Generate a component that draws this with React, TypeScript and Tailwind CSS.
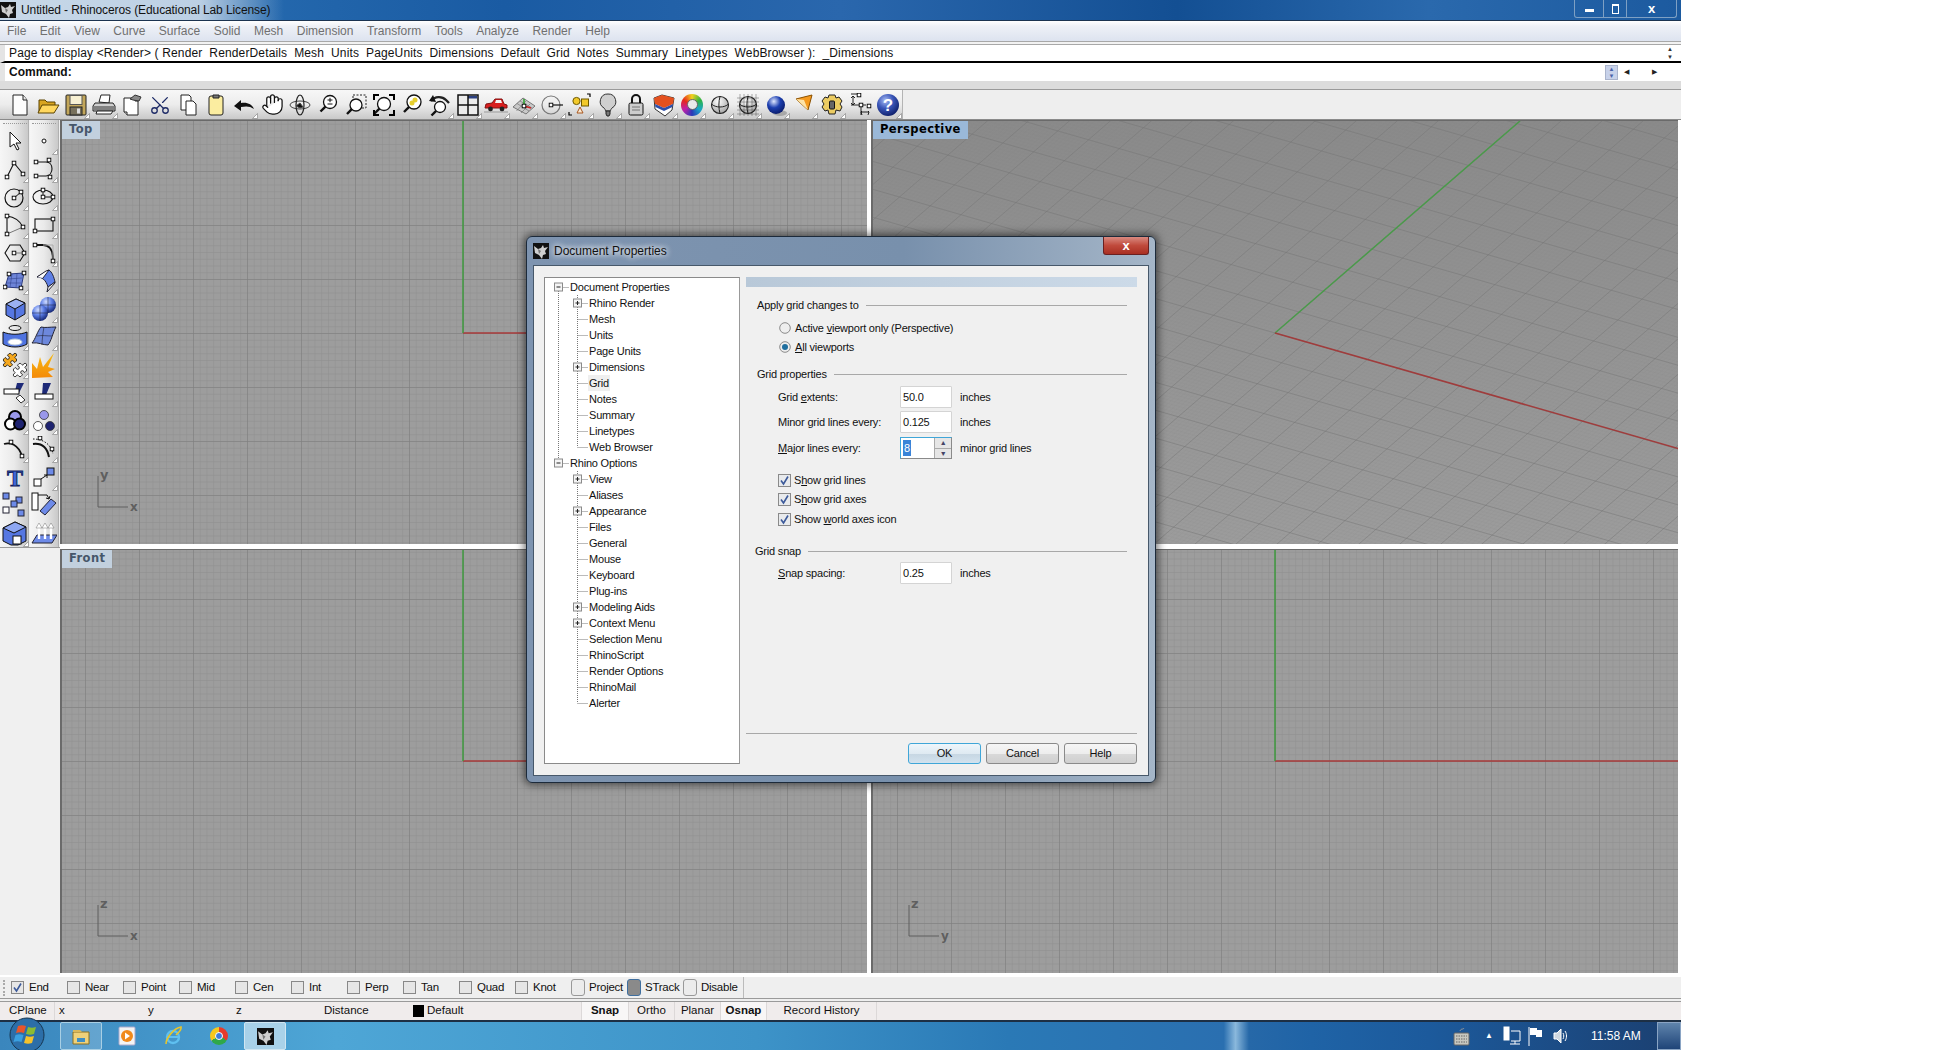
import type { ReactNode } from "react";
import { Hand, Puzzle, Scissors } from "lucide-react";

const menus = ["File", "Edit", "View", "Curve", "Surface", "Solid", "Mesh", "Dimension", "Transform", "Tools", "Analyze", "Render", "Help"];

// little control point square used all over the rhino toolbars
const P = ({ x, y, f = "#fff" }: { x: number; y: number; f?: string }) => (
  <rect x={x - 1.8} y={y - 1.8} width="3.6" height="3.6" fill={f} stroke="#000" strokeWidth="0.9" />
);

const Lens = ({ cx = 13, cy = 10, r = 6, fill = "#fff" }: { cx?: number; cy?: number; r?: number; fill?: string }) => (
  <g fill="none" stroke="#111">
    <circle cx={cx} cy={cy} r={r} fill={fill} strokeWidth="1.3" />
    <path d={`M${cx - r * 0.7} ${cy + r * 0.7}L${cx - r - 3} ${cy + r + 3}`} strokeWidth="2.4" />
  </g>
);

const Ball = ({ id, cx = 12, cy = 12, r = 9, a = "#dfe7ff", b = "#1c3fb0" }: { id: string; cx?: number; cy?: number; r?: number; a?: string; b?: string }) => (
  <>
    <defs>
      <radialGradient id={id} cx="0.38" cy="0.3" r="0.8">
        <stop offset="0" stopColor={a} />
        <stop offset="0.45" stopColor={b} />
        <stop offset="1" stopColor="#06145c" />
      </radialGradient>
    </defs>
    <circle cx={cx} cy={cy} r={r} fill={`url(#${id})`} />
  </>
);

const WireBall = ({ id }: { id: string }) => (
  <>
    <defs>
      <radialGradient id={id} cx="0.4" cy="0.3" r="0.8">
        <stop offset="0" stopColor="#fff" />
        <stop offset="1" stopColor="#9a9a9a" />
      </radialGradient>
    </defs>
    <circle cx="12" cy="12" r="8.5" fill={`url(#${id})`} stroke="#222" strokeWidth="1.1" />
    <path d="M3.5 11c4 4 13 4 17 0M12 3.5c-1.5 5-1.5 12 0 17" fill="none" stroke="#222" strokeWidth="1" />
  </>
);

const topIcons: { flag?: boolean; icon: ReactNode }[] = [
  { icon: <svg width="24" height="24" viewBox="0 0 24 24"><path d="M5 2h10l4 5v15H5z" fill="#fdfdfd" stroke="#222" /><path d="M15 2v5h4" fill="#e8e8e8" stroke="#222" /></svg> },
  { icon: <svg width="24" height="24" viewBox="0 0 24 24"><path d="M3 19V7h6l2 2h8v3" fill="#d9a520" stroke="#5a4200" /><path d="M2 20l4-8h17l-5 8z" fill="#ffd75e" stroke="#5a4200" /></svg> },
  { flag: true, icon: <svg width="24" height="24" viewBox="0 0 24 24"><rect x="2" y="2" width="20" height="20" rx="1" fill="#c2a65a" stroke="#222" /><rect x="6" y="2.5" width="12" height="9" fill="#f6efd2" stroke="#555" /><rect x="6" y="14" width="12" height="8" fill="#77705c" stroke="#222" /><rect x="13" y="15.5" width="3" height="5" fill="#ddd" /></svg> },
  { flag: true, icon: <svg width="24" height="24" viewBox="0 0 24 24"><path d="M7 9l2-7h9l-1 8z" fill="#fff" stroke="#222" /><path d="M3 10h18l2 3v5H1v-5z" fill="#cfcfcf" stroke="#222" /><path d="M2 14h20M2 16h20" stroke="#333" /><path d="M5 18l-1 3h15l2-3z" fill="#fff" stroke="#222" /></svg> },
  { icon: <svg width="24" height="24" viewBox="0 0 24 24"><path d="M4 5h11v3h3v14H7l-3-3z" fill="#fff" stroke="#222" /><path d="M10 6l5-4 6 2-2 4-6-1z" fill="#888" stroke="#333" /><path d="M4 19h3v3" fill="#ddd" stroke="#222" /></svg> },
  { icon: <Scissors size={22} color="#1d2a66" strokeWidth={1.4} className="-rotate-90" /> },
  { icon: <svg width="24" height="24" viewBox="0 0 24 24"><path d="M5 2h8l2 2v13H5z" fill="#fff" stroke="#222" /><path d="M10 8h7l3 3v11H10z" fill="#fff" stroke="#222" /></svg> },
  { icon: <svg width="24" height="24" viewBox="0 0 24 24"><rect x="5" y="3" width="14" height="19" rx="2" fill="#fbeda0" stroke="#222" /><path d="M9 2h6v3H9z" fill="#777" stroke="#222" /></svg> },
  { flag: true, icon: <svg width="24" height="24" viewBox="0 0 24 24"><path d="M2 13l7-6v3c6-1 11 1 13 6-4-3-8-3-13-2v4z" fill="#111" /></svg> },
  { icon: <Hand size={23} color="#111" strokeWidth={1.3} fill="#fff" /> },
  { icon: <svg width="24" height="24" viewBox="0 0 24 24" fill="none" stroke="#444"><ellipse cx="12" cy="12" rx="10" ry="4" /><ellipse cx="12" cy="12" rx="4" ry="10" strokeWidth="1.2" stroke="#222" /><path d="M8 13l4-3 3 4-3 1z" fill="#111" /></svg> },
  { icon: <svg width="24" height="24" viewBox="0 0 24 24"><Lens cx={14} cy={9} r={6.5} /><path d="M11.5 7h5M14 4.8v4.4M11.5 11h5" stroke="#111" fill="none" /></svg> },
  { icon: <svg width="24" height="24" viewBox="0 0 24 24"><rect x="9" y="2" width="13" height="13" fill="none" stroke="#222" strokeDasharray="2 1.5" /><Lens cx={12} cy={12} r={6} /></svg> },
  { icon: <svg width="24" height="24" viewBox="0 0 24 24"><Lens cx={12} cy={11} r={6.5} /><path d="M2 7V2h5M17 2h5v5M22 17v5h-5M7 22H2v-5" fill="none" stroke="#000" strokeWidth="2" /></svg> },
  { icon: <svg width="24" height="24" viewBox="0 0 24 24"><Lens cx={14} cy={9} r={7} /><circle cx="15" cy="7" r="2.5" fill="#e6cf2e" /><circle cx="12" cy="10" r="2.5" fill="#e6cf2e" /></svg> },
  { flag: true, icon: <svg width="24" height="24" viewBox="0 0 24 24"><Lens cx={12} cy={14} r={5.5} /><path d="M3 8c4-5 11-5 15-1l3 3" fill="none" stroke="#222" strokeWidth="2.4" /><path d="M5 2L1 8l7 1z" fill="#111" /></svg> },
  { flag: true, icon: <svg width="24" height="24" viewBox="0 0 24 24"><rect x="2" y="2" width="20" height="20" fill="#ececec" stroke="#111" strokeWidth="1.5" /><rect x="12" y="3" width="9" height="2.5" fill="#2b3f80" /><path d="M12 2v20M2 12h20" stroke="#111" strokeWidth="1.5" /></svg> },
  { flag: true, icon: <svg width="24" height="24" viewBox="0 0 24 24"><path d="M1 15l1-4 6-1 3-4h7l2 5 3 1v3z" fill="#d81e1e" stroke="#801010" /><path d="M12 7h5l1 3h-7z" fill="#f4f4f4" /><circle cx="6.5" cy="16" r="2.4" fill="#222" /><circle cx="18" cy="16" r="2.4" fill="#222" /><path d="M0 19h24" stroke="#999" /></svg> },
  { flag: true, icon: <svg width="24" height="24" viewBox="0 0 24 24" fill="none"><path d="M1 14l10-9 12 8-9 8z" fill="#c9c9c9" stroke="#777" /><path d="M5 10.5l12 7.5M8 8l12 7M4.5 18L14 8M9 20l9-9" stroke="#777" strokeWidth="0.7" /><path d="M12 13V6" stroke="#29a329" strokeWidth="1.5" /><path d="M12 13l7 2" stroke="#d02020" strokeWidth="1.5" /><P x={12} y={13} /></svg> },
  { flag: true, icon: <svg width="24" height="24" viewBox="0 0 24 24" fill="none"><circle cx="11" cy="12" r="9" stroke="#777" strokeWidth="1.2" /><path d="M11 12h12" stroke="#111" strokeWidth="1.2" /><P x={11} y={12} /></svg> },
  { flag: true, icon: <svg width="24" height="24" viewBox="0 0 24 24" fill="none"><circle cx="8.5" cy="8" r="3.6" fill="#f2c92a" stroke="#6d5800" /><rect x="13.5" y="6" width="7" height="7" fill="#f2c92a" stroke="#6d5800" /><path d="M12 14l3 6H9z" fill="#fbe9d0" stroke="#a8561e" /><path d="M19 1h3v3M1 19v3h3" stroke="#000" strokeWidth="1.2" /></svg> },
  { flag: true, icon: <svg width="24" height="24" viewBox="0 0 24 24"><path d="M12 1a7.5 7.5 0 0 0-4 14c1 1 1.5 2 1.5 3h5c0-1 .5-2 1.5-3a7.5 7.5 0 0 0-4-14z" fill="#cfcfcf" stroke="#333" /><path d="M10 18h4v3l-1 2h-2l-1-2z" fill="#777" stroke="#222" /></svg> },
  { flag: true, icon: <svg width="24" height="24" viewBox="0 0 24 24"><path d="M8 11V6a4 4 0 0 1 8 0v5" fill="none" stroke="#111" strokeWidth="2" /><rect x="5" y="10" width="14" height="12" rx="1.5" fill="#cdcdcd" stroke="#111" /><path d="M8 14h8M8 17h8" stroke="#777" /></svg> },
  { flag: true, icon: <svg width="24" height="24" viewBox="0 0 24 24"><path d="M2 5l8-3 12 3-2 12-7 6-10-7z" fill="#fff" stroke="#333" /><path d="M2 5l8-3 12 3-1 6-9 4-9-4z" fill="#e4501e" /><path d="M3 11l9 4 9-4-.6 3-8.4 4-8.6-4z" fill="#2e4ea8" /></svg> },
  { flag: true, icon: <div className="w-[22px] h-[22px] rounded-full bg-[conic-gradient(#f2d21e,#2fb344,#19a8c9,#2a39b8,#c01fa8,#e5261c,#f2d21e)] flex items-center justify-center"><div className="w-[11px] h-[11px] rounded-full bg-[#eaeaea] border border-[#666]" /></div> },
  { flag: true, icon: <svg width="24" height="24" viewBox="0 0 24 24"><WireBall id="wb1" /></svg> },
  { flag: true, icon: <svg width="24" height="24" viewBox="0 0 24 24"><WireBall id="wb2" /><path d="M1 5h22M1 9h22M1 13h22M1 17h22M1 21h22M4 1v22M8 1v22M12 1v22M16 1v22M20 1v22" stroke="#222" strokeWidth="0.5" opacity="0.7" /></svg> },
  { flag: true, icon: <svg width="24" height="24" viewBox="0 0 24 24"><ellipse cx="16" cy="20" rx="7" ry="3" fill="#888" opacity="0.6" /><Ball id="blue1" /></svg> },
  { flag: true, icon: <svg width="24" height="24" viewBox="0 0 24 24"><path d="M4 6l16-4-4 15z" fill="#f59a1e" stroke="#8a5000" /><path d="M4 6l8 1 4 10z" fill="#fde3a8" /></svg> },
  { flag: true, icon: <svg width="24" height="24" viewBox="0 0 24 24"><path d="M9 2h6l1 3 3-1 3 4-2 3 2 3-2 4-4-1-1 4H9l-1-4-3 1-3-4 2-3-2-3 3-4 3 1z" fill="#eccc62" stroke="#222" /><rect x="9.5" y="8" width="5" height="8" rx="1" fill="#666" stroke="#111" /></svg> },
  { icon: <svg width="24" height="24" viewBox="0 0 24 24" fill="none" stroke="#111" strokeWidth="0.9"><path d="M3 1h7M5 3v9M3 12h5M8 12h10M13 12v10M13 19h8" /><path d="M3 5l2-2 2 2M3 10l2 2 2-2M14 22l-1-3 1-1M20 18l1 1-1 3" /><P x={11} y={2} /><P x={13} y={12} /><P x={21} y={13} /></svg> },
  { flag: true, icon: <svg width="24" height="24" viewBox="0 0 24 24"><Ball id="help1" cx={12} cy={12} r={11} a="#a9bdf5" b="#3a56b8" /><text x="12" y="18" textAnchor="middle" fontSize="17" fontWeight="700" fill="#fff" fontFamily="Liberation Sans">?</text></svg> },
];

const sideIcons: { flag?: boolean; icon: ReactNode }[][] = [
  [
    { icon: <svg width="24" height="24" viewBox="0 0 24 24"><path d="M7 3v15l4-3 3 6 2-1-3-6h5z" fill="#fff" stroke="#111" /></svg> },
    { flag: true, icon: <svg width="24" height="24" viewBox="0 0 24 24" fill="none"><path d="M4 20L11 6l9 11" stroke="#111" strokeWidth="1.1" /><P x={4} y={20} /><P x={11} y={6} /><P x={20} y={17} /></svg> },
    { flag: true, icon: <svg width="24" height="24" viewBox="0 0 24 24" fill="none"><circle cx="11" cy="13" r="9" stroke="#111" strokeWidth="1.2" /><path d="M11 13l7-6" stroke="#111" /><P x={11} y={13} /><P x={18} y={7} /></svg> },
    { flag: true, icon: <svg width="24" height="24" viewBox="0 0 24 24" fill="none"><path d="M4 3c8 1 13 5 16 11M4 3v18" stroke="#111" strokeWidth="1.1" /><path d="M4 21l16-7" stroke="#777" /><P x={4} y={3} /><P x={20} y={14} /><P x={4} y={21} /></svg> },
    { flag: true, icon: <svg width="24" height="24" viewBox="0 0 24 24" fill="none"><path d="M7 4h10l5 8-5 8H7L2 12z" stroke="#111" strokeWidth="1.1" /><path d="M11 12h11" stroke="#777" /><P x={11} y={12} /><P x={21} y={12} /></svg> },
    { flag: true, icon: <svg width="24" height="24" viewBox="0 0 24 24"><path d="M6 5l15-1-3 15-16-1z" fill="#6d84d8" stroke="#2a3a80" /><path d="M9 5l-2 13M14 4l-1 15M4 10l15-1M3 14l15 0" stroke="#2a3a80" strokeWidth="0.5" /><P x={6} y={5} /><P x={21} y={4} /><P x={18} y={19} /><P x={2} y={18} /></svg> },
    { flag: true, icon: <svg width="24" height="24" viewBox="0 0 24 24"><path d="M3 7l10-5 9 4v11l-10 6-9-5z" fill="#5677e2" stroke="#111" /><path d="M3 7l9 5 10-6-9-4z" fill="#9bb0f2" stroke="#111" /><path d="M12 12v11" stroke="#111" /></svg> },
    { flag: true, icon: <svg width="26" height="26" viewBox="0 0 26 26"><ellipse cx="13" cy="4" rx="6" ry="2.5" fill="none" stroke="#111" /><path d="M1 8c7 3 17 3 24 0v12c-6 4-18 4-24 0z" fill="#4f73e0" stroke="#111" /><ellipse cx="13" cy="18" rx="7" ry="3" fill="#fff" stroke="#bcd" /></svg> },
    { flag: true, icon: <div className="relative w-[26px] h-[26px]"><Puzzle size={16} fill="#f5a81e" color="#111" strokeWidth={1.2} className="absolute left-0 top-0" /><Puzzle size={16} fill="#fff" color="#111" strokeWidth={1.2} className="absolute right-0 bottom-0" /></div> },
    { flag: true, icon: <svg width="24" height="24" viewBox="0 0 24 24"><path d="M14 2h7l-6 12-3-4z" fill="#1e2a78" /><rect x="1" y="8" width="15" height="5" fill="#fff" stroke="#111" /><path d="M13 17l4-3 5 5-4 3z" fill="#fff" stroke="#333" /></svg> },
    { flag: true, icon: <svg width="24" height="24" viewBox="0 0 24 24" stroke="#000" strokeWidth="2"><circle cx="12" cy="8" r="6" fill="#9a98ea" /><circle cx="7.5" cy="15" r="5.5" fill="#fff" /><circle cx="16.5" cy="15" r="5.5" fill="#1e2370" /></svg> },
    { flag: true, icon: <svg width="24" height="24" viewBox="0 0 24 24" fill="none"><path d="M1 7c6-2 14 0 18 12" stroke="#111" strokeWidth="1.8" /><P x={8} y={5} /><P x={19} y={19} /></svg> },
    { icon: <svg width="26" height="26" viewBox="0 0 26 26"><text x="13" y="22" textAnchor="middle" fontSize="24" fontWeight="700" fontFamily="Liberation Serif" fill="#3f66d8" stroke="#10205c" strokeWidth="0.9">T</text></svg> },
    { icon: <svg width="26" height="26" viewBox="0 0 26 26"><rect x="1" y="1" width="6" height="6" fill="#6d8ae8" stroke="#223" /><rect x="14" y="5" width="6" height="6" fill="#6d8ae8" stroke="#223" /><rect x="9" y="9" width="6" height="6" fill="#6d8ae8" stroke="#223" /><rect x="1" y="15" width="6" height="6" fill="#fff" stroke="#223" /><rect x="16" y="18" width="6" height="6" fill="#6d8ae8" stroke="#223" /></svg> },
    { flag: true, icon: <svg width="26" height="26" viewBox="0 0 26 26"><path d="M1 8l12-6 11 5v14l-8 4H9l-8-4z" fill="#5677e2" stroke="#111" /><path d="M1 8l11 5 12-6-11-5z" fill="#8ea7f2" stroke="#111" /><rect x="11" y="16" width="8" height="8" fill="#fff" stroke="#111" /></svg> },
  ],
  [
    { flag: true, icon: <svg width="24" height="24" viewBox="0 0 24 24"><circle cx="12" cy="12" r="2" fill="#fff" stroke="#111" /></svg> },
    { flag: true, icon: <svg width="24" height="24" viewBox="0 0 24 24" fill="none"><path d="M4 5h10c8 0 8 13 0 14H4" stroke="#111" strokeWidth="1.1" /><P x={4} y={5} /><P x={17} y={3} /><P x={4} y={19} /><P x={18} y={20} /></svg> },
    { flag: true, icon: <svg width="24" height="24" viewBox="0 0 24 24" fill="none"><ellipse cx="11" cy="12" rx="10" ry="7" stroke="#111" strokeWidth="1.1" /><path d="M11 12h10M11 5v7" stroke="#111" /><P x={11} y={12} /><P x={11} y={5} /><P x={21} y={12} /></svg> },
    { flag: true, icon: <svg width="24" height="24" viewBox="0 0 24 24" fill="none"><rect x="3" y="6" width="18" height="12" stroke="#111" strokeWidth="1.1" /><P x={3} y={18} /><P x={21} y={6} /></svg> },
    { flag: true, icon: <svg width="24" height="24" viewBox="0 0 24 24" fill="none"><path d="M3 4h8c6 0 10 5 10 14" stroke="#111" strokeWidth="2" /><path d="M11 4h10v14" stroke="#aaa" /><P x={3} y={4} /><P x={21} y={20} /></svg> },
    { flag: true, icon: <svg width="24" height="24" viewBox="0 0 24 24"><path d="M5 8c5 0 9 3 11 10l7-5c-1-5-3-10-6-12z" fill="#5f80e6" stroke="#223" /><path d="M5 8l9-6 3-1c-2 3-4 5-6 8" fill="#fff" stroke="#223" /><path d="M16 18l-1 5 8-9v-1z" fill="#eee" stroke="#223" /></svg> },
    { flag: true, icon: <svg width="26" height="26" viewBox="0 0 26 26"><Ball id="sph1" cx={17} cy={9} r={8} a="#cfdcff" b="#5b7de6" /><Ball id="sph2" cx={9} cy={17} r={8} a="#cfdcff" b="#5b7de6" /><path d="M9 9v16M1 17h16M17 1v16M9 9h16" stroke="#223" strokeWidth="0.5" /></svg> },
    { flag: true, icon: <svg width="26" height="26" viewBox="0 0 26 26"><path d="M1 19C4 16 7 6 10 3c4 1 9 0 15 0-3 5-5 15-8 18-5 0-10-3-16-2z" fill="#6d88dc" stroke="#223" /><path d="M6 12c5-1 10 0 15 0M13 3c-1 5-2 13-2 18" stroke="#223" strokeWidth="0.6" fill="none" /></svg> },
    { icon: <svg width="26" height="26" viewBox="0 0 26 26"><defs><linearGradient id="boom" x1="0" y1="0" x2="0" y2="1"><stop offset="0" stopColor="#f7bb12" /><stop offset="1" stopColor="#f48a0a" /></linearGradient></defs><path d="M1 26V11l5 6 3-12 3 10L23 1l-6 14 7 2-7 3 5 5z" fill="url(#boom)" /></svg> },
    { flag: true, icon: <svg width="24" height="24" viewBox="0 0 24 24"><path d="M11 2h8l-5 12h-4z" fill="#1e2a78" /><rect x="3" y="13" width="18" height="5" fill="#fff" stroke="#111" /></svg> },
    { flag: true, icon: <svg width="24" height="24" viewBox="0 0 24 24" stroke="#333" strokeWidth="0.8"><circle cx="12" cy="6" r="4.5" fill="#9a98ea" /><circle cx="6" cy="17" r="4.5" fill="#fff" /><circle cx="18" cy="17" r="4.5" fill="#1e2370" /></svg> },
    { flag: true, icon: <svg width="26" height="26" viewBox="0 0 26 26" fill="none"><path d="M2 8c8-1 14 3 16 13" stroke="#111" strokeWidth="2" /><path d="M2 3c10 0 18 5 20 15" stroke="#111" strokeDasharray="1.5 1.5" /><P x={9} y={2} /><P x={21} y={13} /></svg> },
    { flag: true, icon: <svg width="24" height="24" viewBox="0 0 24 24" fill="none"><rect x="2" y="14" width="7" height="7" fill="#fff" stroke="#111" /><rect x="15" y="3" width="7" height="7" fill="#6d8ae8" stroke="#111" /><path d="M9 14l6-4M15 10h-3M15 10v3" stroke="#111" /></svg> },
    { icon: <svg width="26" height="26" viewBox="0 0 26 26"><rect x="1" y="1" width="6" height="17" fill="#fff" stroke="#111" /><path d="M9 19l11-12 5 4-11 12z" fill="#6d8ae8" stroke="#223" /><path d="M7 3h9l2 4M18 7l-3-1M18 7l1-3" fill="none" stroke="#111" /></svg> },
    { icon: <svg width="26" height="26" viewBox="0 0 26 26"><path d="M1 23l5-8h20l-5 8z" fill="#6d8ae8" stroke="#223" /><path d="M8 19V6M14 19V6M20 19V6" stroke="#fff" strokeWidth="2.4" /><path d="M5 8l3-5 3 5zM11 8l3-5 3 5zM17 8l3-5 3 5z" fill="#fff" stroke="#555" strokeWidth="0.4" /></svg> },
  ],
];

function Slot({ icon, flag }: { icon: ReactNode; flag?: boolean }) {
  return (
    <div className="relative w-[28px] h-[28px] shrink-0 flex items-center justify-center">
      {icon}
      {flag && (
        <svg width="6" height="6" viewBox="0 0 6 6" className="absolute right-0 bottom-0">
          <path d="M5.5 0.5v5h-5z" fill="#fff" stroke="#8a8a8a" strokeWidth="0.7" />
        </svg>
      )}
    </div>
  );
}

function Viewport({ id, ox, oy, label, active, h, v, children }: { id: string; ox: number; oy: number; label: string; active?: boolean; h?: boolean; v?: boolean; children?: ReactNode }) {
  return (
    <div className={`relative h-[424px] w-[807px] border-l-2 border-t border-[#6a6a6a] overflow-hidden ${active ? "bg-[linear-gradient(#8a8a8a,#9c9c9c)]" : "bg-[#9d9d9d]"}`}>
      <svg width="807" height="424" className="block">
        <defs>
          <pattern id={`${id}m`} width="6.75" height="6.75" patternUnits="userSpaceOnUse" patternTransform={`translate(${ox} ${oy})`}>
            <path d="M0 0H6.75M0 0V6.75" stroke="#8e8e8e" strokeWidth="1" fill="none" />
          </pattern>
          <pattern id={`${id}M`} width="54" height="54" patternUnits="userSpaceOnUse" patternTransform={`translate(${ox} ${oy})`}>
            <path d="M0 0H54M0 0V54" stroke="#7c7c7c" strokeWidth="1" fill="none" />
          </pattern>
        </defs>
        {!active && <rect width="807" height="424" fill={`url(#${id}m)`} />}
        {!active && <rect width="807" height="424" fill={`url(#${id}M)`} />}
        {h && <path d={`M${ox} ${oy}H807`} stroke="#a83a3a" strokeWidth="1.5" />}
        {v && <path d={`M${ox} ${oy}V0`} stroke="#3f9a3f" strokeWidth="1.5" />}
        {children}
      </svg>
      <div className={`absolute left-0 top-0 h-[18px] px-[7px] flex items-center font-bold text-[11.5px] tracking-[0.4px] [font-family:'DejaVu_Sans',sans-serif] ${active ? "bg-[#9ab8d8] text-black" : "bg-[#c2d0de] text-[#46566a]"}`}>
        {label}
      </div>
    </div>
  );
}

function AxisIcon({ x, y, a, b }: { x: number; y: number; a: string; b: string }) {
  return (
    <g>
      <path d={`M${x} ${y}V${y + 31}H${x + 30}`} fill="none" stroke="#5f5f5f" strokeWidth="1" />
      <text x={x + 2} y={y + 3} fontSize="13" fontWeight="700" fill="#5f5f5f" fontFamily="DejaVu Sans">{a}</text>
      <text x={x + 32} y={y + 35} fontSize="12" fontWeight="700" fill="#5f5f5f" fontFamily="DejaVu Sans">{b}</text>
    </g>
  );
}

// perspective floor, lines run along the two axis directions
function PerspectiveGrid() {
  const ox = 402, oy = 212;
  const gx = 245 / 323.9, gy = -212 / 323.9;
  const rx = 403 / 419.4, ry = 116 / 419.4;
  const lines: ReactNode[] = [];
  for (let i = -150; i <= 150; i++) {
    const s = 4;
    const major = i % 8 === 0;
    const c = major ? "#767676" : "#888888";
    const op = major ? 0.5 : 0.22;
    const ax = ox + gx * i * s, ay = oy + gy * i * s;
    const bx = ox + rx * i * s, by = oy + ry * i * s;
    lines.push(<path key={`a${i}`} d={`M${ax - rx * 1400} ${ay - ry * 1400}L${ax + rx * 1400} ${ay + ry * 1400}`} stroke={c} strokeWidth={major ? 1 : 0.5} opacity={op} />);
    lines.push(<path key={`b${i}`} d={`M${bx - gx * 1400} ${by - gy * 1400}L${bx + gx * 1400} ${by + gy * 1400}`} stroke={c} strokeWidth={major ? 1 : 0.5} opacity={op} />);
  }
  return (
    <g>
      {lines}
      <path d={`M${ox} ${oy}L647 0`} stroke="#4a9a4a" strokeWidth="1.5" />
      <path d={`M${ox} ${oy}L807 328`} stroke="#a03c3c" strokeWidth="1.5" />
    </g>
  );
}

const tree: { t: string; lvl: 0 | 1; plus?: boolean; last?: boolean; sel?: boolean; trunk?: boolean }[] = [
  { t: "Document Properties", lvl: 0 },
  { t: "Rhino Render", lvl: 1, plus: true, trunk: true },
  { t: "Mesh", lvl: 1, trunk: true },
  { t: "Units", lvl: 1, trunk: true },
  { t: "Page Units", lvl: 1, trunk: true },
  { t: "Dimensions", lvl: 1, plus: true, trunk: true },
  { t: "Grid", lvl: 1, sel: true, trunk: true },
  { t: "Notes", lvl: 1, trunk: true },
  { t: "Summary", lvl: 1, trunk: true },
  { t: "Linetypes", lvl: 1, trunk: true },
  { t: "Web Browser", lvl: 1, last: true, trunk: true },
  { t: "Rhino Options", lvl: 0, last: true },
  { t: "View", lvl: 1, plus: true },
  { t: "Aliases", lvl: 1 },
  { t: "Appearance", lvl: 1, plus: true },
  { t: "Files", lvl: 1 },
  { t: "General", lvl: 1 },
  { t: "Mouse", lvl: 1 },
  { t: "Keyboard", lvl: 1 },
  { t: "Plug-ins", lvl: 1 },
  { t: "Modeling Aids", lvl: 1, plus: true },
  { t: "Context Menu", lvl: 1, plus: true },
  { t: "Selection Menu", lvl: 1 },
  { t: "RhinoScript", lvl: 1 },
  { t: "Render Options", lvl: 1 },
  { t: "RhinoMail", lvl: 1 },
  { t: "Alerter", lvl: 1, last: true },
];

function PlusBox({ x, minus }: { x: number; minus?: boolean }) {
  return (
    <>
      <rect x={x - 4} y="4" width="8" height="8" fill="#f4f4f4" stroke="#8a8a8a" />
      <path d={`M${x - 2} 8H${x + 2}`} stroke="#222" />
      {!minus && <path d={`M${x} 6V10`} stroke="#222" />}
    </>
  );
}

function TreeRow({ t, lvl, plus, last, sel, trunk }: (typeof tree)[number]) {
  const dots = { stroke: "#777", strokeDasharray: "1 1", fill: "none" };
  return (
    <div className="flex items-center h-[16px] text-[#111]">
      {lvl === 0 ? (
        <svg width="25" height="16" className="shrink-0">
          <path d={`M13.5 ${t === "Document Properties" ? 8 : 0}V${last ? 8 : 16}`} {...dots} />
          <path d="M13.5 8.5H24" {...dots} />
          <PlusBox x={13.5} minus />
        </svg>
      ) : (
        <svg width="44" height="16" className="shrink-0">
          {trunk && <path d="M13.5 0V16" {...dots} />}
          <path d={`M32.5 0V${last ? 8 : 16}`} {...dots} />
          <path d="M32.5 8.5H43" {...dots} />
          {plus && <PlusBox x={32.5} />}
        </svg>
      )}
      <span className={sel ? "bg-[#efefef] px-[1px] -ml-[1px]" : ""}>{t}</span>
    </div>
  );
}

function SectionHead({ title, ml = 11 }: { title: string; ml?: number }) {
  return (
    <div className="flex items-center h-[16px] gap-[7px]" style={{ marginLeft: ml }}>
      <span className="whitespace-nowrap">{title}</span>
      <div className="flex-1 h-px bg-[#a8a8a8]" />
    </div>
  );
}

function Field({ label, value, unit }: { label: ReactNode; value: string; unit: string }) {
  return (
    <div className="flex items-center h-[22px] ml-[32px]">
      <span className="w-[122px]">{label}</span>
      <div className="w-[52px] h-[22px] bg-white border border-[#d4d4d4] rounded-[1px] pl-[2px] flex items-center">{value}</div>
      <span className="ml-[8px]">{unit}</span>
    </div>
  );
}

function Check({ on, children }: { on?: boolean; children: ReactNode }) {
  return (
    <div className="flex items-center gap-[3px] h-[16px] ml-[32px]">
      <svg width="13" height="13" viewBox="0 0 13 13" className="shrink-0">
        <rect x="0.5" y="0.5" width="12" height="12" fill="#e8eaec" stroke="#8a8a8a" />
        {on && <path d="M3 6.5l2.5 3.5L10 2.5" fill="none" stroke="#3c5a9a" strokeWidth="1.6" />}
      </svg>
      <span>{children}</span>
    </div>
  );
}

function Radio({ on, children }: { on?: boolean; children: ReactNode }) {
  return (
    <div className="flex items-center gap-[4px] h-[16px] ml-[33px]">
      <svg width="12" height="12" viewBox="0 0 12 12" className="shrink-0">
        <circle cx="6" cy="6" r="5.3" fill="#eee" stroke="#8a8a8a" />
        {on && <circle cx="6" cy="6" r="3" fill="#1f6f9f" />}
      </svg>
      <span>{children}</span>
    </div>
  );
}

function Btn({ children, primary }: { children: ReactNode; primary?: boolean }) {
  return (
    <div className={`w-[73px] h-[21px] rounded-[3px] flex items-center justify-center border ${primary ? "border-[#3fa6d8] bg-[linear-gradient(#eef6fb_0%,#dfeaf2_50%,#c6d6e2_50%,#d2e2ee_100%)]" : "border-[#8a8a8a] bg-[linear-gradient(#f6f6f6_0%,#ededed_50%,#d9d9d9_50%,#cfcfcf_100%)]"}`}>
      {children}
    </div>
  );
}

function RhinoGlyph({ size = 16 }: { size?: number }) {
  return (
    <svg width={size} height={size} viewBox="0 0 16 16" className="shrink-0">
      <rect width="16" height="16" fill="#111" />
      <path d="M1 3l4 3 3-1 2-3 1 3 4-1-3 4 1 3-3 1-1 4-3-4-4-2z" fill="#cfcfcf" />
      <path d="M5 6l3 2-2 3z" fill="#777" />
    </svg>
  );
}

function Dialog() {
  return (
    <div className="absolute left-[526px] top-[236px] w-[630px] h-[547px] rounded-[6px] px-[6px] pb-[6px] flex flex-col border border-[#1c2a3a] bg-[linear-gradient(90deg,#7e94b0_0%,#7890ac_60%,#a5b6c8_100%)] shadow-[0_0_8px_2px_rgba(0,0,0,0.55)]">
      <div className="h-[28px] shrink-0 flex items-center gap-[5px]">
        <RhinoGlyph />
        <span className="text-[12px] text-[#111] [text-shadow:0_0_6px_#fff,0_0_6px_#fff]">Document Properties</span>
        <div className="ml-auto self-start w-[46px] h-[18px] rounded-b-[3px] border border-t-0 border-[#6a2020] bg-[linear-gradient(#d98a80_0%,#c04a3c_50%,#a92f22_100%)] flex items-center justify-center text-white font-bold text-[13px] leading-none">
          x
        </div>
      </div>
      <div className="flex-1 bg-[#f0f0f0] border border-[#47586a] pl-[10px] pt-[11px] flex gap-[6px] text-[11px] tracking-[-0.2px] text-[#111]">
        <div className="w-[196px] h-[487px] bg-white border border-[#8a8a8a] border-r-[#999] pt-[1px]">
          {tree.map((r) => (
            <TreeRow key={r.t} {...r} />
          ))}
        </div>
        <div className="w-[391px] h-[487px] flex flex-col">
          <div className="h-[10px] bg-[linear-gradient(90deg,#b8c8d8,#ccdae8)]" />
          <div className="w-[381px] flex flex-col">
            <div className="mt-[10px]"><SectionHead title="Apply grid changes to" /></div>
            <div className="mt-[7px] flex flex-col gap-[3px]">
              <Radio>Active <u>v</u>iewport only (Perspective)</Radio>
              <Radio on><u>A</u>ll viewports</Radio>
            </div>
            <div className="mt-[11px]"><SectionHead title="Grid properties" /></div>
            <div className="mt-[4px] flex flex-col gap-[3px]">
              <Field label={<>Grid <u>e</u>xtents:</>} value="50.0" unit="inches" />
              <Field label={<>Minor <u>g</u>rid lines every:</>} value="0.125" unit="inches" />
              <div className="flex items-center h-[22px] ml-[32px] mt-[1px]">
                <span className="w-[122px]"><u>M</u>ajor lines every:</span>
                <div className="w-[52px] h-[22px] bg-white border border-[#8a8a8a] border-l-[#3fa6d8] border-t-[#3fa6d8] flex items-center pl-[2px]">
                  <span className="bg-[#3a84d8] text-white px-[1px]">8</span>
                  <div className="ml-auto w-[17px] h-full flex flex-col border-l border-[#aaa] text-[#446] text-[7px] leading-none">
                    <div className="flex-1 flex items-center justify-center bg-[#e6e6e6] border-b border-[#aaa]">▲</div>
                    <div className="flex-1 flex items-center justify-center bg-[#e6e6e6]">▼</div>
                  </div>
                </div>
                <span className="ml-[8px]">minor grid lines</span>
              </div>
            </div>
            <div className="mt-[13px] flex flex-col gap-[3.5px]">
              <Check on>S<u>h</u>ow grid lines</Check>
              <Check on>S<u>h</u>ow grid axes</Check>
              <Check on>Show <u>w</u>orld axes icon</Check>
            </div>
            <div className="mt-[16px]"><SectionHead title="Grid snap" ml={9} /></div>
            <div className="mt-[3px]">
              <Field label={<><u>S</u>nap spacing:</>} value="0.25" unit="inches" />
            </div>
          </div>
          <div className="mt-auto h-px bg-[#a8a8a8]" />
          <div className="h-[30px] flex items-end justify-end gap-[5px]">
            <Btn primary>OK</Btn>
            <Btn>Cancel</Btn>
            <Btn>Help</Btn>
          </div>
        </div>
      </div>
    </div>
  );
}

const snaps = ["End", "Near", "Point", "Mid", "Cen", "Int", "Perp", "Tan", "Quad", "Knot"];

function StatusCell({ w, bold, lit, center, children }: { w: string; bold?: boolean; lit?: boolean; center?: boolean; children?: ReactNode }) {
  return (
    <div className={`${w} h-full flex items-center shrink-0 ${center ? "justify-center border-r border-[#dcd8d8]" : "pl-[4px]"} ${bold ? "font-bold" : ""} ${lit ? "bg-[#f8f6f6]" : ""}`}>
      {children}
    </div>
  );
}

export default function App() {
  return (
    <div className="relative w-[1950px] h-[1050px] bg-white overflow-hidden text-[12px] text-[#111] [font-family:'Liberation_Sans',Arial,sans-serif]">
      <div className="w-[1681px] h-full flex flex-col">
        {/* window title */}
        <div className="h-[21px] flex items-start border-b border-[#1b3350] bg-[linear-gradient(90deg,#2f76b8_0%,#1a5ba3_30%,#2a67ad_50%,#134f93_70%,#2a69ad_85%,#1c5a9f_100%)]">
          <div className="flex items-center h-full gap-[5px] pr-[14px] bg-[linear-gradient(90deg,#c8d8e8_0%,#bcd0e4_70%,transparent_100%)]">
            <RhinoGlyph />
            <span className="whitespace-nowrap tracking-[-0.1px]">Untitled - Rhinoceros (Educational Lab License)</span>
          </div>
          <div className="ml-auto mr-[4px] h-[18px] w-[103px] flex rounded-b-[3px] border border-t-0 border-[#7ea0c4] text-white">
            <div className="w-[28px] flex items-end justify-center pb-[5px]"><div className="w-[9px] h-[3px] bg-white" /></div>
            <div className="w-[24px] flex items-center justify-center border-x border-[#7ea0c4]"><div className="w-[7px] h-[10px] border border-t-2 border-white" /></div>
            <div className="flex-1 flex items-center justify-center font-bold text-[13px] leading-none">x</div>
          </div>
        </div>
        {/* menu */}
        <div className="h-[20px] flex items-center pl-[7px] gap-[13.5px] text-[#707070] bg-[linear-gradient(#ffffff_0%,#eef1f7_25%,#dde3ef_100%)]">
          {menus.map((m) => (
            <span key={m}>{m}</span>
          ))}
        </div>
        <div className="h-[4px] bg-[#f2f2f2] border-y border-[#a8a8a8]" />
        {/* command area */}
        <div className="h-[18px] flex items-center bg-white border-b-2 border-black border-l-[5px] border-l-[#e4e4e4]">
          <span className="pl-[4px] whitespace-pre tracking-[0.14px]">Page to display &lt;Render&gt; ( Render  RenderDetails  Mesh  Units  PageUnits  Dimensions  Default  Grid  Notes  Summary  Linetypes  WebBrowser ):  _Dimensions</span>
          <div className="ml-auto w-[10px] mr-[6px] flex flex-col items-center text-[6px] leading-[8px] text-[#333]"><span>▲</span><span>▼</span></div>
        </div>
        <div className="h-[18px] flex items-center bg-white border-l-[5px] border-l-[#e4e4e4]">
          <span className="pl-[4px] font-bold">Command:</span>
          <div className="ml-auto flex items-center mr-[18px]">
            <div className="w-[13px] h-[15px] flex flex-col items-center bg-[#c8d2ea] text-[6px] leading-[7.5px] text-[#4a62a8] border border-[#aab4cc]"><span>▲</span><span>▼</span></div>
            <div className="w-[45px] flex justify-between px-[6px] text-[7px] text-[#222]"><span>◀</span><span>▶</span></div>
          </div>
        </div>
        <div className="h-[9px] bg-[#dcdcdc] border-b border-[#9a9a9a]" />
        {/* main toolbar */}
        <div className="h-[30px] flex bg-[#eeeeee] border-b border-[#8a8a8a]">
          <div className="w-[903px] h-full flex items-center pl-[6px] border-r border-[#b4b4b4] bg-[linear-gradient(#f7f7f7_0%,#ececec_50%,#c9c9c9_100%)]">
            {topIcons.map((b, i) => (
              <Slot key={i} icon={b.icon} flag={b.flag} />
            ))}
          </div>
        </div>
        <div className="flex-1 flex min-h-0">
          {/* side toolbars */}
          <div className="w-[60px] shrink-0 bg-[#f0f0f0]">
            <div className="h-[428px] flex gap-[1px] border-b border-[#9a9a9a]">
              {sideIcons.map((col, c) => (
                <div key={c} className={`w-[29px] flex flex-col items-center bg-[linear-gradient(90deg,#f6f6f6_0%,#eaeaea_50%,#c9c9c9_100%)] border-r border-[#b0b0b0] ${c === 0 ? "pl-[1px]" : ""}`}>
                  <div className="h-[7px] w-[24px] shrink-0 border-t border-dotted border-[#999] mt-[3px] -mb-[3px]" />
                  {col.map((b, i) => (
                    <Slot key={i} icon={b.icon} flag={b.flag} />
                  ))}
                </div>
              ))}
            </div>
          </div>
          {/* viewports */}
          <div className="w-[1618px] flex flex-col gap-[5px]">
            <div className="flex gap-[4px]">
              <Viewport id="top" ox={401} oy={212} label="Top" h v>
                <AxisIcon x={36} y={355} a="y" b="x" />
              </Viewport>
              <Viewport id="persp" ox={402} oy={212} label="Perspective" active>
                <PerspectiveGrid />
              </Viewport>
            </div>
            <div className="flex gap-[4px]">
              <Viewport id="front" ox={401} oy={211} label="Front" h v>
                <AxisIcon x={36} y={355} a="z" b="x" />
              </Viewport>
              <Viewport id="right" ox={402} oy={211} label="Right" h v>
                <AxisIcon x={36} y={355} a="z" b="y" />
              </Viewport>
            </div>
          </div>
        </div>
        {/* osnap bar */}
        <div className="h-[23px] flex items-center pl-[3px] bg-[#efefef] border-t-2 border-white text-[11.5px] tracking-[-0.25px]">
          <div className="w-[5px] h-[16px] border-l-2 border-dotted border-[#aaa] mr-[3px]" />
          {snaps.map((s, i) => (
            <div key={s} className="w-[56px] flex items-center gap-[5px]">
              <svg width="13" height="13" viewBox="0 0 13 13" className="shrink-0">
                <rect x="0.5" y="0.5" width="12" height="12" fill="#e6e6e6" stroke="#888" />
                {i === 0 && <path d="M3 6.5l2.5 3.5L10 2.5" fill="none" stroke="#3c5a9a" strokeWidth="1.6" />}
              </svg>
              <span>{s}</span>
            </div>
          ))}
          {["Project", "STrack", "Disable"].map((s, i) => (
            <div key={s} className={`flex items-center gap-[4px] ${i === 2 ? "w-[61px] border-r border-[#bbb] h-full" : "w-[56px]"}`}>
              <div className={`w-[14px] h-[17px] rounded-[3px] border shrink-0 ${i === 1 ? "bg-[#8a8a8a] border-[#3f6f9f]" : "bg-[#ececec] border-[#999]"}`} />
              <span>{s}</span>
            </div>
          ))}
        </div>
        <div className="h-[4px] bg-[#efefef] border-y border-[#9a9a9a]" />
        {/* status bar */}
        <div className="h-[18px] flex items-center bg-[#f0ecec] text-[11.5px]">
          <div className="w-[55px] h-full flex items-center pl-[9px] border-r border-[#dcd8d8] shrink-0">CPlane</div>
          <StatusCell w="w-[89px]">x</StatusCell>
          <StatusCell w="w-[88px]">y</StatusCell>
          <StatusCell w="w-[88px]">z</StatusCell>
          <StatusCell w="w-[89px]">Distance</StatusCell>
          <div className="w-[173px] h-full flex items-center gap-[3px] pl-[4px] border-r border-[#dcd8d8] shrink-0">
            <div className="w-[11px] h-[12px] bg-black" />
            <span>Default</span>
          </div>
          <StatusCell w="w-[47px]" center bold lit>Snap</StatusCell>
          <StatusCell w="w-[46px]" center>Ortho</StatusCell>
          <StatusCell w="w-[46px]" center>Planar</StatusCell>
          <StatusCell w="w-[46px]" center bold lit>Osnap</StatusCell>
          <StatusCell w="w-[110px]" center>Record History</StatusCell>
        </div>
        {/* windows taskbar */}
        <div className="h-[30px] flex items-center border-t-2 border-[#1d2f44] bg-[linear-gradient(90deg,#3a86bd_0%,#4ea6d6_20%,#3d93c8_45%,#2a79b6_60%,#2a6fb0_72.8%,#8ab8dc_73.5%,#2668a8_74.3%,#1f63a6_78%,#1c5a9c_85%,#1b3f70_100%)] text-white">
          <div className="relative w-[60px] h-full shrink-0">
            <svg width="38" height="36" viewBox="0 0 38 36" className="absolute left-[8px] -top-[5px]">
              <circle cx="19" cy="18" r="17" fill="#2c6ea8" stroke="#16354f" />
              <path d="M18 9c-3-1-5-1-8 0l-2 7c3-1 5-1 8 0z" fill="#e8552a" />
              <path d="M20 10c3 1 5 1 8 0l-2 7c-3 1-5 1-8 0z" fill="#8bbb33" />
              <path d="M15.5 18c-3-1-5-1-8 0l-2 7c3-1 5-1 8 0z" fill="#3aa0e0" />
              <path d="M18 19c3 1 5 1 8 0l-2 7c-3 1-5 1-8 0z" fill="#f5c22c" />
            </svg>
          </div>
          <div className="flex gap-[4px] h-full">
            <div className="w-[42px] h-full flex items-center justify-center rounded-[2px] border border-[#a8cfe4] bg-[#ffffff30]">
              <svg width="20" height="20" viewBox="0 0 20 20"><path d="M2 6h16v12H2z" fill="#eed17a" stroke="#8a7020" /><path d="M2 4h7l2 2H2z" fill="#d9b75a" /><rect x="6" y="12" width="8" height="4" fill="#3f8ec4" /></svg>
            </div>
            <div className="w-[42px] h-full flex items-center justify-center">
              <svg width="18" height="20" viewBox="0 0 18 20"><rect x="1" y="1" width="16" height="18" rx="1" fill="#f4f4f4" stroke="#aac" /><circle cx="9" cy="10" r="6" fill="#f08a1c" /><path d="M7 6.5l5 3.5-5 3.5z" fill="#fff" /></svg>
            </div>
            <div className="w-[42px] h-full flex items-center justify-center">
              <svg width="20" height="22" viewBox="0 0 20 22" fill="none"><circle cx="10" cy="12" r="6" stroke="#5fc0f0" strokeWidth="2.4" /><path d="M4 12h12" stroke="#5fc0f0" strokeWidth="2" /><path d="M3 19C3 13 11 3 18 2c1 3-3 6-5 8" stroke="#e8c52c" strokeWidth="1.6" /></svg>
            </div>
            <div className="w-[42px] h-full flex items-center justify-center">
              <div className="w-[18px] h-[18px] rounded-full bg-[conic-gradient(#e53a2c_0_33%,#2fa84a_33%_66%,#f5c81e_66%_100%)] flex items-center justify-center">
                <div className="w-[8px] h-[8px] rounded-full bg-[#3b7ddb] border border-white" />
              </div>
            </div>
            <div className="w-[42px] h-full flex items-center justify-center rounded-[2px] border border-[#cfe6f2] bg-[#d4e8f4b0]">
              <RhinoGlyph size={17} />
            </div>
          </div>
          <div className="ml-auto h-full flex items-center">
            <svg width="20" height="22" viewBox="0 0 20 22" className="shrink-0" fill="none"><path d="M8 6c1-3 3-1 4-3" stroke="#999" /><rect x="2" y="8" width="15" height="12" rx="1" fill="#c8c8c0" stroke="#666" /><path d="M4 11h11M4 14h11M4 17h11" stroke="#666" strokeDasharray="1.5 1" /></svg>
            <span className="ml-[13px] text-[8px] leading-none">▲</span>
            <svg width="18" height="22" viewBox="0 0 18 22" className="ml-[10px] shrink-0" fill="none" stroke="#fff"><rect x="1" y="2" width="5" height="13" fill="#fff" /><path d="M8 6h9v10H8M12 16v3M7 19h10" /></svg>
            <svg width="16" height="22" viewBox="0 0 16 22" className="ml-[6px] shrink-0"><path d="M2 2v19" stroke="#fff" /><path d="M3 3h7v2h5v7H9v-2H3z" fill="#fff" /></svg>
            <svg width="16" height="20" viewBox="0 0 16 20" className="ml-[9px] shrink-0" fill="none" stroke="#fff"><path d="M2 7h3l4-4v14l-4-4H2z" fill="#cfd8e0" /><path d="M11 7c1 2 1 4 0 6M13 5c2 3 2 7 0 10" /></svg>
            <span className="ml-[23px] w-[50px] whitespace-nowrap">11:58 AM</span>
            <div className="ml-[16px] w-[24px] h-full border border-[#8aa4c4] bg-[linear-gradient(#5f84ac,#1f4478)]" />
          </div>
        </div>
      </div>
      <Dialog />
    </div>
  );
}
